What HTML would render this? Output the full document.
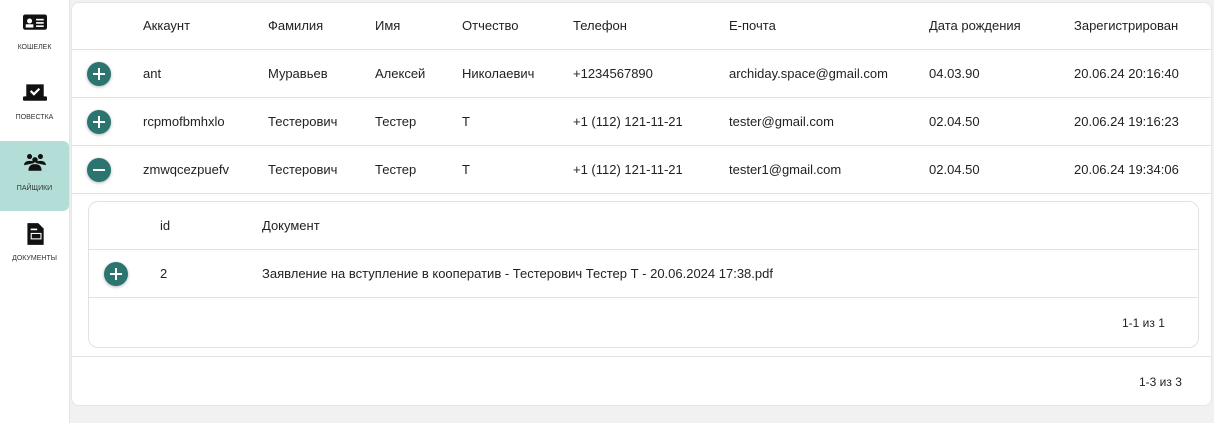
<!DOCTYPE html><html><head><meta charset="utf-8"><style>
*{box-sizing:border-box;margin:0;padding:0}
body{width:1214px;height:423px;background:#f1f1f1;font-family:"Liberation Sans",sans-serif;color:#222;position:relative;overflow:hidden}
.side{position:absolute;left:0;top:0;width:70px;height:423px;background:#fff;border-right:1px solid #dfe5df}
.it{position:absolute;left:0;width:69px;height:70px;text-align:center;font-size:7px;color:#333}
.it svg{position:absolute;left:23px;top:10px}
.it span{position:absolute;left:0;right:0;top:44px}
.act{background:#b3ddd7;border-radius:0 6px 6px 0}
.card{position:absolute;left:71px;top:2px;width:1141px;height:404px;background:#fff;border-radius:8px;border:1px solid #e6e6e6}
.t{position:absolute;font-size:13px;white-space:nowrap}
.ln{position:absolute;height:1px;background:#e2e2e2}
.btn{position:absolute;width:24px;height:24px;border-radius:50%;background:#2b7470;box-shadow:0 1px 3px rgba(0,0,0,.3)}
.btn:before{content:"";position:absolute;left:6px;top:11px;width:12px;height:2px;background:#fff}
.p:after{content:"";position:absolute;left:11px;top:6px;width:2px;height:12px;background:#fff}
.inner{position:absolute;left:16px;top:198px;width:1111px;height:147px;border:1px solid #e2e2e2;border-radius:10px}
</style></head><body>
<div class="side">
<div class="it" style="top:0"><svg width="24" height="22" viewBox="0 0 22 20"><rect x="0" y="4" width="22" height="14" rx="2" fill="#111"/><circle cx="6" cy="10" r="2.3" fill="#fff"/><rect x="2.5" y="13" width="7" height="3" fill="#fff"/><rect x="12" y="8" width="7" height="1.5" fill="#fff"/><rect x="12" y="11" width="7" height="1.5" fill="#fff"/><rect x="12" y="14" width="7" height="1.5" fill="#fff"/></svg><span>КОШЕЛЕК</span></div>
<div class="it" style="top:70px"><svg width="24" height="24" viewBox="0 0 22 22"><rect x="3" y="4" width="16" height="13" fill="#111"/><path d="M7 10l3 3 5-5" stroke="#fff" stroke-width="2" fill="none"/><rect x="0" y="15" width="22" height="4" rx="1" fill="#111"/></svg><span>ПОВЕСТКА</span></div>
<div class="it act" style="top:141px"><svg width="24" height="22" viewBox="0 0 22 20"><circle cx="6" cy="5" r="2.3" fill="#111"/><circle cx="16" cy="5" r="2.3" fill="#111"/><circle cx="11" cy="8" r="2.5" fill="#111"/><path d="M1 13q0-4 5-4t4 2M21 13q0-4-5-4t-4 2" fill="#111"/><path d="M5 18q0-6 6-6t6 6z" fill="#111"/></svg><span>ПАЙЩИКИ</span></div>
<div class="it" style="top:211px"><svg width="24" height="26" viewBox="0 0 22 24"><path d="M4 2h10l5 5v15H4z" fill="#111"/><rect x="7" y="11" width="10" height="6" fill="#fff"/><rect x="8" y="12" width="8" height="4" fill="#111"/><rect x="7" y="7" width="6" height="1.5" fill="#fff"/></svg><span>ДОКУМЕНТЫ</span></div>
</div>
<div class="card">
<div class="ln" style="left:0;right:0;top:46px"></div>
<div class="ln" style="left:0;right:0;top:94px"></div>
<div class="ln" style="left:0;right:0;top:142px"></div>
<div class="ln" style="left:0;right:0;top:190px"></div>
<div class="ln" style="left:0;right:0;top:353px"></div>
<div class="btn p" style="left:15px;top:59px"></div>
<div class="btn p" style="left:15px;top:107px"></div>
<div class="btn" style="left:15px;top:155px"></div>
<div class="inner">
<div class="ln" style="left:0;right:0;top:47px"></div>
<div class="ln" style="left:0;right:0;top:95px"></div>
<div class="btn p" style="left:15px;top:60px"></div>
<div class="t" style="left:71px;top:16px">id</div><div class="t" style="left:173px;top:16px">Документ</div>
<div class="t" style="left:71px;top:64px">2</div><div class="t" style="left:173px;top:64px">Заявление на вступление в кооператив - Тестерович Тестер Т - 20.06.2024 17:38.pdf</div>
<div class="t" style="left:1033px;top:114px;font-size:12px">1-1 из 1</div>
</div>
<div class="t" style="left:1067px;top:372px;font-size:12px">1-3 из 3</div>
</div>
<div style="position:absolute;left:0;top:0">
<div class="t" style="left:143px;top:18px">Аккаунт</div><div class="t" style="left:268px;top:18px">Фамилия</div><div class="t" style="left:375px;top:18px">Имя</div><div class="t" style="left:462px;top:18px">Отчество</div><div class="t" style="left:573px;top:18px">Телефон</div><div class="t" style="left:729px;top:18px">E-почта</div><div class="t" style="left:929px;top:18px">Дата рождения</div><div class="t" style="left:1074px;top:18px">Зарегистрирован</div>
<div class="t" style="left:143px;top:66px">ant</div><div class="t" style="left:268px;top:66px">Муравьев</div><div class="t" style="left:375px;top:66px">Алексей</div><div class="t" style="left:462px;top:66px">Николаевич</div><div class="t" style="left:573px;top:66px">+1234567890</div><div class="t" style="left:729px;top:66px">archiday.space@gmail.com</div><div class="t" style="left:929px;top:66px">04.03.90</div><div class="t" style="left:1074px;top:66px">20.06.24 20:16:40</div>
<div class="t" style="left:143px;top:114px">rcpmofbmhxlo</div><div class="t" style="left:268px;top:114px">Тестерович</div><div class="t" style="left:375px;top:114px">Тестер</div><div class="t" style="left:462px;top:114px">Т</div><div class="t" style="left:573px;top:114px">+1 (112) 121-11-21</div><div class="t" style="left:729px;top:114px">tester@gmail.com</div><div class="t" style="left:929px;top:114px">02.04.50</div><div class="t" style="left:1074px;top:114px">20.06.24 19:16:23</div>
<div class="t" style="left:143px;top:162px">zmwqcezpuefv</div><div class="t" style="left:268px;top:162px">Тестерович</div><div class="t" style="left:375px;top:162px">Тестер</div><div class="t" style="left:462px;top:162px">Т</div><div class="t" style="left:573px;top:162px">+1 (112) 121-11-21</div><div class="t" style="left:729px;top:162px">tester1@gmail.com</div><div class="t" style="left:929px;top:162px">02.04.50</div><div class="t" style="left:1074px;top:162px">20.06.24 19:34:06</div>
</div>
</body></html>
